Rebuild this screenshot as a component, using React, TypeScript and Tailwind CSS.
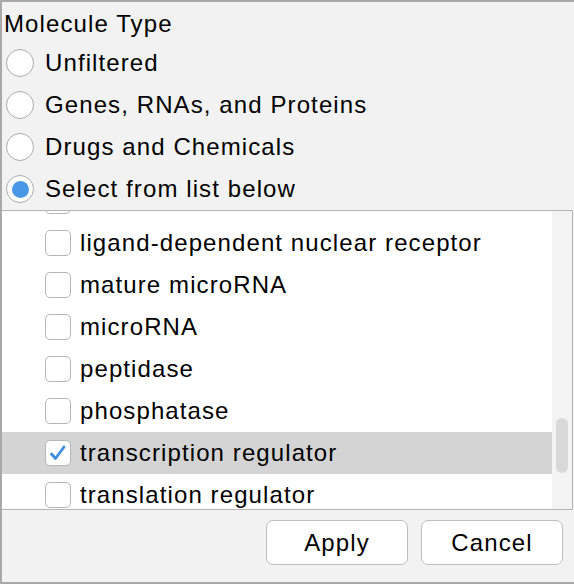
import { useState } from "react";

const moleculeOptions = [
  "Unfiltered",
  "Genes, RNAs, and Proteins",
  "Drugs and Chemicals",
  "Select from list below",
];

const moleculeTypes = [
  "kinase",
  "ligand-dependent nuclear receptor",
  "mature microRNA",
  "microRNA",
  "peptidase",
  "phosphatase",
  "transcription regulator",
  "translation regulator",
];

const Radio = ({ on }: { on: boolean }) => (
  <span className="flex items-center justify-center w-[28px] h-[28px] rounded-full border-[1.5px] border-[#acacac] bg-white shrink-0">
    {on && <span className="w-[17px] h-[17px] rounded-full bg-[#4a97e6]" />}
  </span>
);

const Checkbox = ({ on }: { on: boolean }) => (
  <span className="flex items-center justify-center w-[26px] h-[26px] rounded-[5px] border-[1.5px] border-[#b6b6b6] bg-white shrink-0">
    {on && (
      <svg width="20" height="20" viewBox="0 0 20 20" fill="none">
        <path
          d="M3.5 11 L7.5 15.5 L16 4"
          stroke="#3d8de0"
          strokeWidth="2.8"
          strokeLinecap="round"
          strokeLinejoin="round"
        />
      </svg>
    )}
  </span>
);

export default function App() {
  const [mode, setMode] = useState(3);
  const [checked, setChecked] = useState<string[]>(["transcription regulator"]);
  const selected = "transcription regulator";

  const toggle = (t: string) =>
    setChecked((c) => (c.includes(t) ? c.filter((x) => x !== t) : [...c, t]));

  return (
    <div
      className="w-[574px] h-[584px] flex flex-col bg-[#f2f2f2] border-t-2 border-l-2 border-b-2 border-[#a9a9a9] text-black text-[24px] tracking-[1.1px]"
      style={{ fontFamily: '"Liberation Sans", Arial, sans-serif' }}
    >
      <div className="pt-[4px] pl-[2px] leading-[36px]">Molecule Type</div>
      {moleculeOptions.map((opt, idx) => (
        <div
          key={opt}
          className="flex items-center h-[42px] pl-[4px] gap-[11px] cursor-default"
          onClick={() => setMode(idx)}
        >
          <Radio on={mode === idx} />
          <span className="leading-none">{opt}</span>
        </div>
      ))}

      <div className="flex h-[300px] mr-[1px] border border-l-0 border-[#b5b5b5] bg-white overflow-hidden">
        <div className="flex-1 overflow-hidden">
          <div className="-mt-[31px] flex flex-col">
            {moleculeTypes.map((t) => (
              <div
                key={t}
                className={
                  "flex items-center h-[42px] pl-[43px] gap-[9px] shrink-0 " +
                  (t === selected ? "bg-[#d4d4d4]" : "")
                }
                onClick={() => toggle(t)}
              >
                <Checkbox on={checked.includes(t)} />
                <span className="leading-none whitespace-nowrap">{t}</span>
              </div>
            ))}
          </div>
        </div>
        <div className="w-[20px] bg-[#f3f3f3] flex flex-col items-center">
          <div className="mt-[207px] w-[12px] h-[55px] rounded-full bg-[#d8d8d8]" />
        </div>
      </div>

      <div className="flex justify-end gap-[13px] pt-[10px] pr-[11px]">
        <button className="w-[142px] h-[45px] rounded-[7px] border border-[#bdbdbd] bg-white">
          Apply
        </button>
        <button className="w-[142px] h-[45px] rounded-[7px] border border-[#bdbdbd] bg-white">
          Cancel
        </button>
      </div>
    </div>
  );
}
